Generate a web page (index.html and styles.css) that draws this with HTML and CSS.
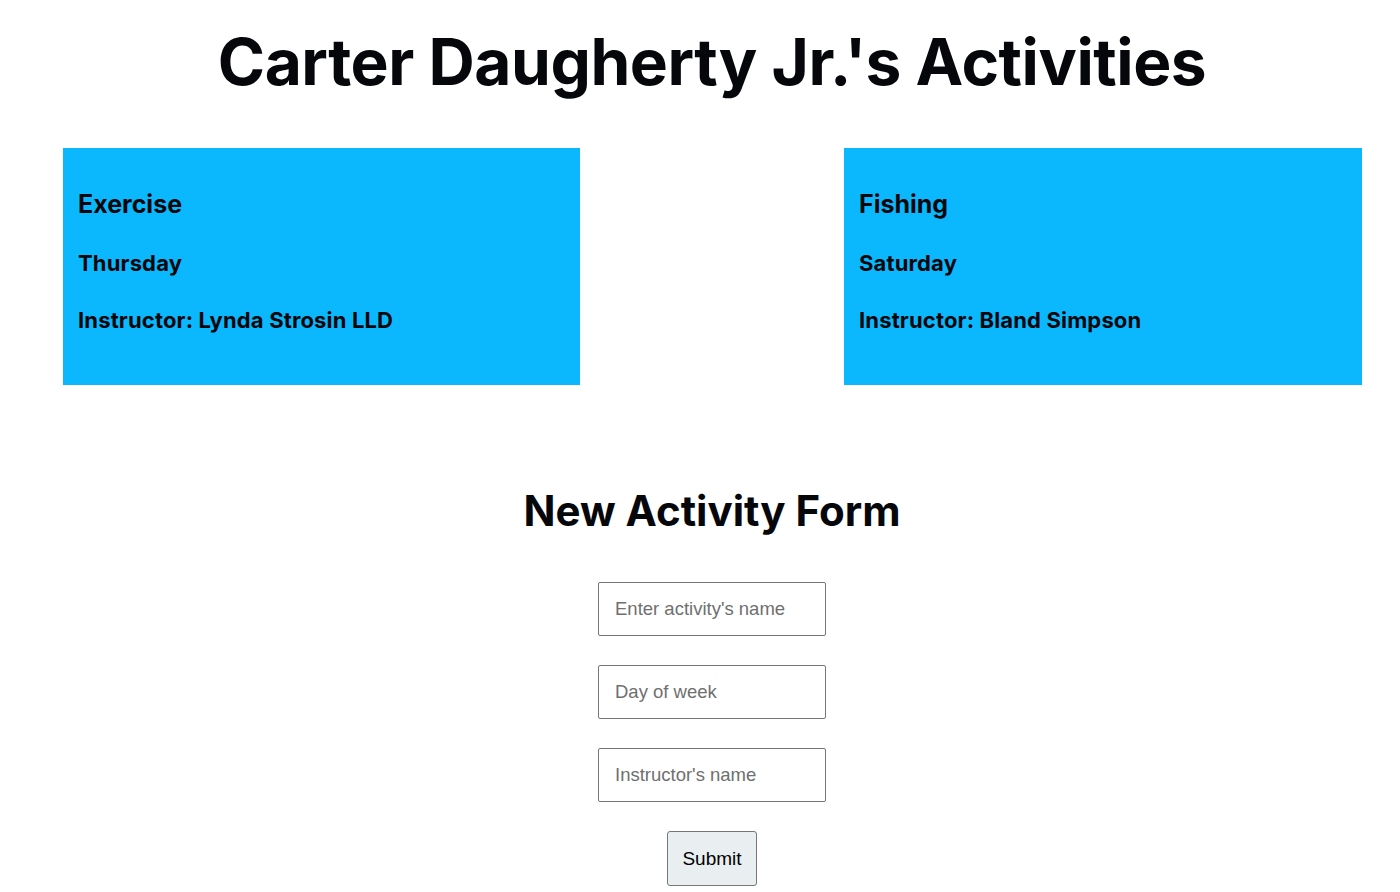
FILE: index.html
```html
<!DOCTYPE html>
<html lang="en">
<head>
<meta charset="utf-8">
<title>Activities</title>
<link rel="stylesheet" href="styles.css">
</head>
<body>
<main class="page">
  <h1 class="title">Carter Daugherty Jr.'s Activities</h1>
  <section class="cards">
    <article class="card">
      <h2 class="card-name">Exercise</h2>
      <p class="card-line">Thursday</p>
      <p class="card-line">Instructor: Lynda Strosin LLD</p>
    </article>
    <article class="card">
      <h2 class="card-name">Fishing</h2>
      <p class="card-line">Saturday</p>
      <p class="card-line">Instructor: Bland Simpson</p>
    </article>
  </section>
  <h2 class="form-title">New Activity Form</h2>
  <form class="form">
    <input class="field" type="text" placeholder="Enter activity's name">
    <input class="field" type="text" placeholder="Day of week">
    <input class="field" type="text" placeholder="Instructor's name">
    <button class="submit" type="button">Submit</button>
  </form>
</main>
</body>
</html>
```
FILE: styles.css
```css
* { box-sizing: border-box; }
html, body { margin: 0; padding: 0; background: #fff; }
body {
  font-family: Inter, "Noto Sans", sans-serif;
  color: #05070b;
}
.page {
  padding-left: 24px;
  display: flex;
  flex-direction: column;
  align-items: stretch;
}
.title {
  margin: 22px 0 0;
  text-align: center;
  font-size: 64px;
  font-weight: 700;
  line-height: 80px;
  letter-spacing: -0.45px;
}
.cards {
  display: flex;
  justify-content: space-between;
  padding: 0 38px 0 39px;
  margin-top: 46px;
}
.card {
  width: 517px;
  height: 237px;
  background: #0bb8fd;
  padding: 40px 15px 0;
}
.card + .card { width: 518px; }
.card-name {
  margin: 0;
  font-size: 25px;
  font-weight: 700;
  line-height: 32px;
}
.card-line {
  margin: 30px 0 0;
  font-size: 22px;
  font-weight: 700;
  line-height: 26px;
  letter-spacing: 0.15px;
}
.card-line + .card-line { margin-top: 31px; }
.form-title {
  margin: 100px 0 0;
  text-align: center;
  font-size: 42px;
  font-weight: 700;
  line-height: 52px;
}
.form {
  display: flex;
  flex-direction: column;
  align-items: center;
  margin-top: 45px;
  gap: 29px;
}
.field {
  width: 228px;
  height: 54px;
  border: 1px solid #767676;
  border-radius: 2px;
  padding: 0 16px;
  font-family: "Liberation Sans", Arial, sans-serif;
  font-size: 18.5px;
  color: #222;
  background: #fff;
}
.field::placeholder { color: #6f6f6f; }
.submit {
  width: 90px;
  height: 55px;
  border: 1px solid #767676;
  border-radius: 3px;
  background: #e9eff0;
  font-family: "Liberation Sans", Arial, sans-serif;
  font-size: 19px;
  color: #000;
}
```
